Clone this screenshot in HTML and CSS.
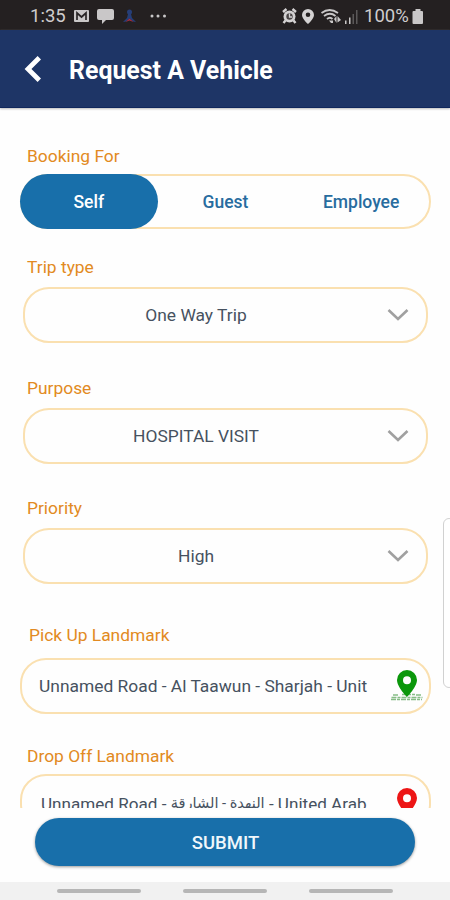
FILE: index.html
```html
<!DOCTYPE html>
<html lang="en">
<head>
<meta charset="utf-8">
<title>Request A Vehicle</title>
<link rel="stylesheet" href="styles.css">
</head>
<body>
<div class="screen">
  <div class="status">
    <span class="time">1:35</span>
    <svg class="notices" width="94" height="18" viewBox="0 0 94 18">
      <rect x="0" y="3" width="15" height="12" rx="1" fill="#c9c7c8"/>
      <path d="M3 13V6l4.500 4L12 6v7" fill="none" stroke="#292526" stroke-width="1.700"/>
      <path d="M25 2h13q2 0 2 2v7q0 2-2 2h-6l-4 4v-4h-3q-2 0-2-2V4q0-2 2-2z" fill="#c9c7c8"/>
      <circle cx="55.500" cy="5" r="2.500" fill="#263e78"/>
      <path d="M54 7h3l1 4 4 4-3-.5-3.500-3-3.500 3-3 .5 4-4z" fill="#263e78"/>
      <path d="M51.500 15l4-3.500 4 3.500-4-1.500z" fill="#a92e43"/>
      <g fill="#c9c7c8"><circle cx="78" cy="9" r="1.500"/><circle cx="84" cy="9" r="1.500"/><circle cx="90.500" cy="9" r="1.500"/></g>
    </svg>
    <svg class="signals" width="78" height="18" viewBox="0 0 78 18">
      <circle cx="7.500" cy="9.500" r="6" fill="#d4d2d3"/>
      <path d="M1 5l3.500-3M14 5l-3.500-3M3.500 13.500L1.500 16M11.500 13.500l2 2.500" stroke="#d4d2d3" stroke-width="2.400"/>
      <circle cx="7.500" cy="9.500" r="3.200" fill="#4a4647"/>
      <path d="M7.500 6.500v3.500h2.500" fill="none" stroke="#d4d2d3" stroke-width="1.300"/>
      <path d="M26 2a6 6 0 0 0-6 6c0 4 6 9 6 9s6-5 6-9a6 6 0 0 0-6-6zm0 3.500a2.300 2.300 0 1 1 0 4.600 2.300 2.300 0 0 1 0-4.600z" fill="#d4d2d3" fill-rule="evenodd"/>
      <g fill="none" stroke="#c9c7c8" stroke-width="1.800">
        <path d="M39.500 6q8-6 16.500 0M42 9q6-4.500 11.500 0M45 12q3-2.500 5.500 0"/>
      </g>
      <path d="M47 13.500h4L51 16h-2zM52 12l2.500-3v7zM55.500 9v6.500L59 13z" fill="#c9c7c8"/>
      <path d="M63 13.500h1.500V17H63zM67 10.500h1.500V17H67z" fill="#c9c7c8"/>
      <path d="M70.500 7H72v10h-1.500zM74 3h1.500v14H74z" fill="#5b5859"/>
    </svg>
    <span class="percent">100%</span>
    <svg class="battery" width="12" height="18" viewBox="0 0 12 18">
      <path d="M3.500 2h5v2H10q1 0 1 1v11q0 1-1 1H1.500q-1 0-1-1V5q0-1 1-1h2z" fill="#c9c7c8"/>
    </svg>
  </div>
  <header class="appbar">
    <svg class="back" width="18" height="28" viewBox="0 0 18 28"><path d="M15.300 2.700L4 14l11.300 11.300" fill="none" stroke="#fff" stroke-width="4.800"/></svg>
    <h1 class="title">Request A Vehicle</h1>
  </header>
  <main class="form">
    <section class="field field-booking">
      <div class="label">Booking For</div>
      <div class="segments">
        <div class="segment active">Self</div>
        <div class="segment">Guest</div>
        <div class="segment">Employee</div>
      </div>
    </section>
    <section class="field field-trip">
      <div class="label">Trip type</div>
      <div class="box select"><span class="value">One Way Trip</span><svg class="chevron" width="22" height="14" viewBox="0 0 22 14"><path d="M1.500 2L11 11l9.500-9" fill="none" stroke="#a0a0a0" stroke-width="2.600"/></svg></div>
    </section>
    <section class="field field-purpose">
      <div class="label">Purpose</div>
      <div class="box select"><span class="value">HOSPITAL VISIT</span><svg class="chevron" width="22" height="14" viewBox="0 0 22 14"><path d="M1.500 2L11 11l9.500-9" fill="none" stroke="#a0a0a0" stroke-width="2.600"/></svg></div>
    </section>
    <section class="field field-priority">
      <div class="label">Priority</div>
      <div class="box select"><span class="value">High</span><svg class="chevron" width="22" height="14" viewBox="0 0 22 14"><path d="M1.500 2L11 11l9.500-9" fill="none" stroke="#a0a0a0" stroke-width="2.600"/></svg></div>
    </section>
    <section class="field field-pickup">
      <div class="label">Pick Up Landmark</div>
      <div class="box place"><span class="address">Unnamed Road - Al Taawun - Sharjah - Unit</span>
        <svg class="pin" width="34" height="34" viewBox="0 0 34 34">
          <path d="M3 26h6M12 25.500h13M26 26h6M1.500 28.500h31M1 30.500h31" stroke="#87bd87" stroke-width="1.500" stroke-dasharray="5 1 3 1"/>
          <path d="M17 1A10 10 0 0 0 7 11c0 7 10 17 10 17s10-10 10-17A10 10 0 0 0 17 1zm0 6.200a4 4 0 1 1 0 8 4 4 0 0 1 0-8z" fill="#0b970b" fill-rule="evenodd"/>
        </svg>
      </div>
    </section>
    <section class="field field-dropoff">
      <div class="label">Drop Off Landmark</div>
      <div class="box place"><span class="address">Unnamed Road - <span class="arabic">النهدة - الشارقة</span> - United Arab</span>
        <svg class="pin" width="34" height="34" viewBox="0 0 34 34">
          <path d="M17 1A10 10 0 0 0 7 11c0 7 10 17 10 17s10-10 10-17A10 10 0 0 0 17 1zm0 6.200a4 4 0 1 1 0 8 4 4 0 0 1 0-8z" fill="#ed1616" fill-rule="evenodd"/>
        </svg>
      </div>
    </section>
  </main>
  <footer class="actions"><button class="submit">SUBMIT</button></footer>
  <nav class="gestures"><i class="bar"></i><i class="bar"></i><i class="bar"></i></nav>
  <div class="edge"></div>
</div>
</body>
</html>
```
FILE: styles.css
```css
* { box-sizing: border-box; }
body { margin: 0; font-family: Roboto, "Noto Sans", "DejaVu Sans", sans-serif; }
.screen { position: relative; display: flex; flex-direction: column; width: 450px; height: 900px; overflow: hidden; background: #fefefe; }
.status { display: flex; align-items: center; height: 30px; padding: 2px 26px 0 30px; background: #242021; color: #cfcdce; font-size: 18.500px; flex: none; }
.time { width: 44px; white-space: nowrap; }
.notices { flex: none; }
.signals { margin-left: auto; flex: none; }
.percent { width: 48px; margin-left: 4px; white-space: nowrap; }
.battery { flex: none; }
.appbar { display: flex; align-items: center; height: 78px; flex: none; padding-left: 24px; background: #1e3566; border-bottom: 1px solid #10275c; box-shadow: 0 1px 2px #bbb; }
.back { flex: none; }
.title { margin: 4px 0 0 27px; color: #fff; font-size: 24.900px; line-height: 30px; font-weight: 700; white-space: nowrap; }
.form { height: 700px; flex: none; overflow: hidden; padding: 38px 19px 0 20px; }
.label { height: 20px; padding-left: 7px; color: #e28a22; font-size: 17.400px; line-height: 20px; white-space: nowrap; }
.segments { display: grid; grid-template-columns: repeat(3, 1fr); height: 55px; margin-top: 8px; border: 2px solid #fae0b0; border-radius: 28px; }
.segment { display: flex; align-items: center; justify-content: center; padding-top: 1px; color: #286c9f; font-size: 17.500px; font-weight: 500; }
.active { margin: -2px 0 -2px -2px; border-radius: 28px; background: #186faa; color: #fff; }
.box { display: flex; align-items: center; height: 56px; margin-top: 10px; border: 2px solid #fae0b0; border-radius: 26px; color: #465160; font-size: 17.400px; }
.select { margin-left: 3px; margin-right: 3px; padding-right: 17px; }
.value { flex: 1; padding-right: 20px; text-align: center; }
.chevron { flex: none; }
.field-trip { margin-top: 28px; }
.field-purpose, .field-priority { margin-top: 34.500px; }
.field-pickup { margin-top: 41px; }
.field-pickup .label { padding-left: 9px; }
.field-pickup .box { margin-top: 13px; }
.field-dropoff { margin-top: 32px; }
.field-dropoff .box { margin-top: 8px; padding-top: 3px; }
.place { padding-left: 17px; padding-right: 5px; justify-content: space-between; }
.address { width: 336px; line-height: 24px; overflow: hidden; white-space: nowrap; }
.field-dropoff .address { width: 327px; margin-left: 2px; padding-top: 2px; font-size: 17.100px; }
.arabic { position: relative; top: -2px; font-size: 14.600px; }
.pin { flex: none; }
.actions { height: 74px; flex: none; padding: 10px 35px 0; }
.submit { display: block; width: 380px; height: 48px; padding: 1px 0 0 1px; border: 0; border-radius: 24px; background: #186faa; box-shadow: 0 1px 3px #999; color: #f0f7fb; font: 500 18.500px Roboto, sans-serif; }
.gestures { display: flex; align-items: center; justify-content: center; gap: 42px; height: 18px; background: #f1f1f1; }
.bar { width: 84px; height: 4px; border-radius: 2px; background: #b6b6b6; }
.edge { position: absolute; left: 443px; top: 518px; width: 12px; height: 170px; border: 1px solid #d1d1d1; border-radius: 7px; background: #fff; }
```
